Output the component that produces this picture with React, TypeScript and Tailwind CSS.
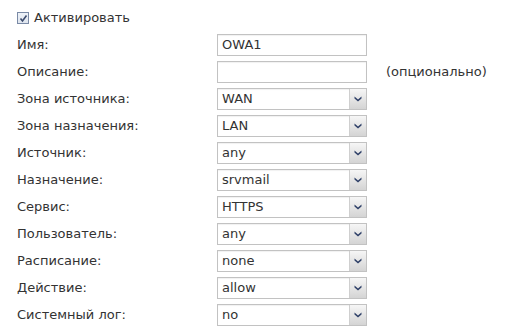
const rows: { label: string; value: string; kind: 'text' | 'select'; note?: string }[] = [
  { label: 'Имя:', value: 'OWA1', kind: 'text' },
  { label: 'Описание:', value: '', kind: 'text', note: '(опционально)' },
  { label: 'Зона источника:', value: 'WAN', kind: 'select' },
  { label: 'Зона назначения:', value: 'LAN', kind: 'select' },
  { label: 'Источник:', value: 'any', kind: 'select' },
  { label: 'Назначение:', value: 'srvmail', kind: 'select' },
  { label: 'Сервис:', value: 'HTTPS', kind: 'select' },
  { label: 'Пользователь:', value: 'any', kind: 'select' },
  { label: 'Расписание:', value: 'none', kind: 'select' },
  { label: 'Действие:', value: 'allow', kind: 'select' },
  { label: 'Системный лог:', value: 'no', kind: 'select' },
];

function Field({ value, kind }: { value: string; kind: 'text' | 'select' }) {
  return (
    <div className="w-[150px] h-[22px] flex border border-[#c2c2c2] bg-white shadow-[inset_0_1px_1px_rgba(0,0,0,0.06)]">
      <span className="flex-1 px-[4px] leading-[20px] text-[#333]">{value}</span>
      {kind === 'select' && (
        <span className="w-[17px] flex items-center justify-center border-l border-[#cfcfcf] bg-gradient-to-b from-[#f6f6f6] to-[#d4d4d4]">
          <svg width="8" height="6" viewBox="0 0 8 6">
            <path d="M0.5 0.5 L4 3.5 L7.5 0.5 L7.5 2.5 L4 5.5 L0.5 2.5 Z" fill="#2f4068" />
          </svg>
        </span>
      )}
    </div>
  );
}

export default function App() {
  return (
    <div className="w-[510px] h-[336px] bg-white pl-[17px] pt-[7px] text-[13px] text-[#333] font-['DejaVu_Sans',sans-serif] flex flex-col gap-[5px]">
      <div className="h-[22px] flex items-center gap-[5px]">
        <span className="w-[12px] h-[12px] border border-[#7a8aa6] bg-gradient-to-b from-[#eef2f8] to-[#dfe5ee] flex items-center justify-center">
          <svg width="9" height="9" viewBox="0 0 9 9">
            <path d="M1.5 4.5 L3.5 7 L7.5 1.5" fill="none" stroke="#3d4c6e" strokeWidth="1.6" />
          </svg>
        </span>
        <span>Активировать</span>
      </div>
      {rows.map((r) => (
        <div key={r.label} className="h-[22px] flex items-center">
          <span className="w-[200px]">{r.label}</span>
          <Field value={r.value} kind={r.kind} />
          {r.note && <span className="ml-[19px]">{r.note}</span>}
        </div>
      ))}
    </div>
  );
}
